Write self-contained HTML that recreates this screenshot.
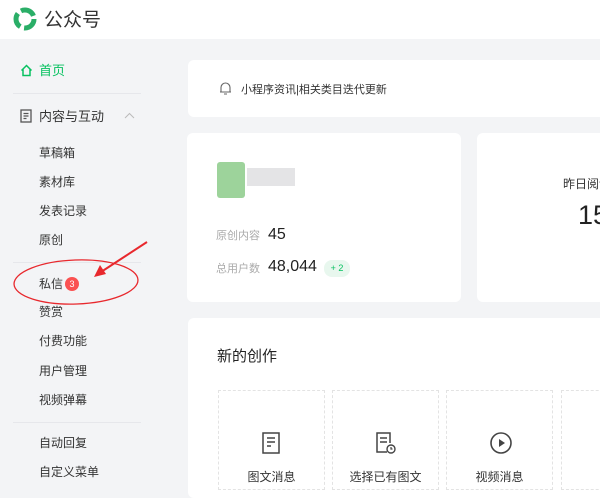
<!DOCTYPE html><html><head><meta charset="utf-8"><style>
*{margin:0;padding:0;box-sizing:border-box}
body{width:600px;height:485px;overflow:hidden;background:#f3f4f6;font-family:"Liberation Sans","Noto Sans CJK SC",sans-serif;position:relative;color:#333}
.hdr{position:absolute;left:0;top:0;width:600px;height:39px;background:#fff}
.a{position:absolute;white-space:nowrap}
.si{position:absolute;left:39px;font-size:12px;color:#333}
.sep{position:absolute;left:13px;width:128px;height:1px;background:#e6e7eb}
.card{position:absolute;background:#fff;border-radius:6px}
.tile{position:absolute;top:390px;width:107px;height:100px;border:1px dashed #e3e3e3;background:#fff}
.tile span{position:absolute;top:77px;width:100%;text-align:center;font-size:12px;color:#333}
.tile svg{position:absolute;left:42px;top:40px}
</style></head><body>
<div class="hdr"></div>
<svg class="a" style="left:13px;top:7px" width="24" height="24" viewBox="0 0 24 24"><circle cx="12" cy="12" r="9" fill="none" stroke="#2aae67" stroke-width="5" stroke-dasharray="15 4"/></svg>
<div class="a" style="left:44px;top:5px;font-size:19px;color:#333">公众号</div>
<svg class="a" style="left:20px;top:64px" width="13" height="13" viewBox="0 0 13 13"><path d="M1.5 6.5L6.5 1.5 11.5 6.5M3 5v6.5h7V5" fill="none" stroke="#07c160" stroke-width="1.5"/></svg>
<div class="a" style="left:39px;top:60px;font-size:13px;color:#07c160">首页</div>
<div class="sep" style="top:93px"></div>
<svg class="a" style="left:20px;top:109px" width="12" height="14" viewBox="0 0 12 14"><rect x="1" y="1" width="10" height="12" fill="none" stroke="#555" stroke-width="1.3"/><path d="M3.5 4.5h5M3.5 7h5M3.5 9.5h3" stroke="#555" stroke-width="1.2"/></svg>
<div class="a" style="left:39px;top:106px;font-size:13px;color:#333">内容与互动</div>
<svg class="a" style="left:124px;top:112px" width="11" height="7" viewBox="0 0 11 7"><path d="M1 6l4.5-4.5L10 6" fill="none" stroke="#bbb" stroke-width="1"/></svg>
<div class="si" style="top:144px">草稿箱</div>
<div class="si" style="top:173px">素材库</div>
<div class="si" style="top:202px">发表记录</div>
<div class="si" style="top:231px">原创</div>
<div class="sep" style="top:262px"></div>
<div class="si" style="top:275px">私信</div>
<div class="a" style="left:65px;top:277px;width:14px;height:14px;border-radius:50%;background:#fa5151;color:#fff;font-size:9px;text-align:center;line-height:14px">3</div>
<div class="si" style="top:303px">赞赏</div>
<div class="si" style="top:332px">付费功能</div>
<div class="si" style="top:362px">用户管理</div>
<div class="si" style="top:391px">视频弹幕</div>
<div class="sep" style="top:422px"></div>
<div class="si" style="top:434px">自动回复</div>
<div class="si" style="top:463px">自定义菜单</div>
<svg class="a" style="left:0;top:230px" width="200" height="80"><ellipse cx="76" cy="52" rx="62" ry="22" fill="none" stroke="#e8282d" stroke-width="1.3" transform="rotate(-2 76 52)"/><path d="M147 12L101 42" stroke="#e8282d" stroke-width="2"/><path d="M94 47l6-12 6 9z" fill="#e8282d"/></svg>
<div class="card" style="left:188px;top:60px;width:420px;height:57px"></div>
<svg class="a" style="left:219px;top:81px" width="13" height="15" viewBox="0 0 13 15"><path d="M2 11V6.5a4.5 4.5 0 0 1 9 0V11h1H1zM5 13h3" fill="none" stroke="#666" stroke-width="1.1"/></svg>
<div class="a" style="left:241px;top:81px;font-size:11px;color:#333">小程序资讯|相关类目迭代更新</div>
<div class="card" style="left:187px;top:133px;width:274px;height:169px"></div>
<div class="a" style="left:217px;top:162px;width:28px;height:36px;background:#8ccb8a;border-radius:3px;opacity:.85"></div>
<div class="a" style="left:247px;top:168px;width:48px;height:18px;background:#e4e4e6"></div>
<div class="a" style="left:216px;top:227px;font-size:11px;color:#aaa">原创内容</div>
<div class="a" style="left:268px;top:226px;font-size:16px;color:#222">45</div>
<div class="a" style="left:216px;top:260px;font-size:11px;color:#aaa">总用户数</div>
<div class="a" style="left:268px;top:258px;font-size:16px;color:#222">48,044</div>
<div class="a" style="left:324px;top:260px;width:26px;height:17px;border-radius:8px;background:#e8f7ee;color:#07c160;font-size:9px;text-align:center;line-height:17px">+ 2</div>
<div class="card" style="left:477px;top:133px;width:140px;height:169px"></div>
<div class="a" style="left:563px;top:175px;font-size:12px;color:#333">昨日阅读</div>
<div class="a" style="left:578px;top:200px;font-size:27px;color:#222">15</div>
<div class="card" style="left:188px;top:318px;width:420px;height:180px"></div>
<div class="a" style="left:217px;top:345px;font-size:15px;color:#222">新的创作</div>
<div class="tile" style="left:218px"><svg width="20" height="24" viewBox="0 0 20 24"><rect x="2" y="2" width="16" height="20" fill="none" stroke="#444" stroke-width="1.5"/><path d="M6 7h8M6 11h8M6 15h4" stroke="#444" stroke-width="1.5"/></svg><span>图文消息</span></div>
<div class="tile" style="left:332px"><svg width="22" height="24" viewBox="0 0 22 24"><path d="M12 21H2V2h13v10" fill="none" stroke="#444" stroke-width="1.5"/><path d="M5 7h7M5 11h7" stroke="#444" stroke-width="1.5"/><circle cx="16" cy="18" r="4" fill="none" stroke="#444" stroke-width="1.4"/><path d="M16 16v2h1.5" stroke="#444" stroke-width="1.2" fill="none"/></svg><span>选择已有图文</span></div>
<div class="tile" style="left:446px"><svg width="24" height="24" viewBox="0 0 24 24"><circle cx="12" cy="12" r="10" fill="none" stroke="#444" stroke-width="1.6"/><path d="M10 8v8l6-4z" fill="#444"/></svg><span>视频消息</span></div>
<div class="tile" style="left:561px"></div>
</body></html>
